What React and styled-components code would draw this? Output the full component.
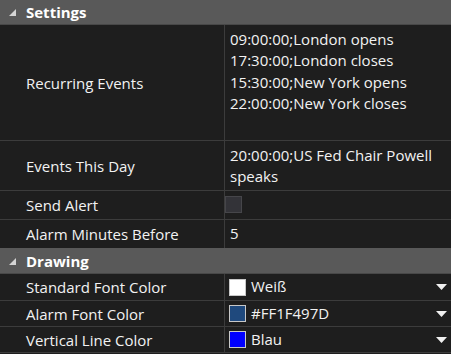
import React from "react";
import styled, { createGlobalStyle } from "styled-components";

const Global = createGlobalStyle`
  html, body { margin: 0; padding: 0; background: #1e1e1e; }
  body { font-family: "Open Sans", "Noto Sans", sans-serif; font-size: 15px; color: #f2f2f2; }
  * { box-sizing: border-box; }
`;

const Grid = styled.div`
  width: 451px;
  height: 354px;
  background: #1e1e1e;
  overflow: hidden;
  display: flex;
  flex-direction: column;
`;

const Category = styled.div`
  height: ${(p) => p.$h}px;
  background: #595959;
  border-bottom: 1px solid #484848;
  display: flex;
  align-items: center;
  font-weight: 700;
  color: #ffffff;
  font-size: 15px;
  flex-shrink: 0;
`;

const Expander = styled.svg`
  width: 26px;
  height: 24px;
  flex-shrink: 0;
`;

const Row = styled.div`
  display: grid;
  grid-template-columns: 225px 1fr;
  height: ${(p) => p.$h}px;
  border-bottom: ${(p) => (p.$last ? "none" : "1px solid #3c3c3c")};
  flex-shrink: 0;
`;

const Label = styled.div`
  display: flex;
  align-items: center;
  padding-left: 26px;
  border-right: 1px solid #3c3c3c;
  white-space: nowrap;
`;

const Value = styled.div`
  display: flex;
  align-items: ${(p) => (p.$top ? "flex-start" : "center")};
  padding: ${(p) => (p.$top ? "4px 4px 0 5px" : "0 4px 0 5px")};
  line-height: 21.3px;
  min-width: 0;
`;

const Lines = styled.div`
  display: flex;
  flex-direction: column;
`;

const Check = styled.div`
  width: 17px;
  height: 17px;
  margin-left: -5px;
  margin-top: -2px;
  background: #333338;
  border: 1px solid #46464a;
`;

const Swatch = styled.div`
  width: 17px;
  height: 17px;
  background: ${(p) => p.$c};
  border: 1px solid #c8c8c8;
  margin-right: 5px;
  margin-left: -1px;
  flex-shrink: 0;
`;

const ColorText = styled.span`
  flex: 1;
`;

const Arrow = styled.svg`
  width: 11px;
  height: 6px;
  flex-shrink: 0;
`;

const Header = ({ children, h }) => (
  <Category $h={h}>
    <Expander viewBox="0 0 26 24">
      <polygon points="16,9 16,16 9,16" fill="#d4d4d4" />
    </Expander>
    {children}
  </Category>
);

const ColorValue = ({ c, name }) => (
  <Value>
    <Swatch $c={c} />
    <ColorText>{name}</ColorText>
    <Arrow viewBox="0 0 11 6">
      <polygon points="0,0 11,0 5.5,6" fill="#f0f0f0" />
    </Arrow>
  </Value>
);

export default function App() {
  return (
    <>
      <Global />
      <Grid>
        <Header h={25}>Settings</Header>
        <Row $h={116}>
          <Label>Recurring Events</Label>
          <Value $top>
            <Lines>
              <span>09:00:00;London opens</span>
              <span>17:30:00;London closes</span>
              <span>15:30:00;New York opens</span>
              <span>22:00:00;New York closes</span>
            </Lines>
          </Value>
        </Row>
        <Row $h={50}>
          <Label>Events This Day</Label>
          <Value $top>
            <span>20:00:00;US Fed Chair Powell speaks</span>
          </Value>
        </Row>
        <Row $h={29}>
          <Label>Send Alert</Label>
          <Value>
            <Check />
          </Value>
        </Row>
        <Row $h={28} $last>
          <Label>Alarm Minutes Before</Label>
          <Value>5</Value>
        </Row>
        <Header h={26}>Drawing</Header>
        <Row $h={27}>
          <Label>Standard Font Color</Label>
          <ColorValue c="#ffffff" name="Weiß" />
        </Row>
        <Row $h={26}>
          <Label>Alarm Font Color</Label>
          <ColorValue c="#1f497d" name="#FF1F497D" />
        </Row>
        <Row $h={26}>
          <Label>Vertical Line Color</Label>
          <ColorValue c="#0000ff" name="Blau" />
        </Row>
      </Grid>
    </>
  );
}
